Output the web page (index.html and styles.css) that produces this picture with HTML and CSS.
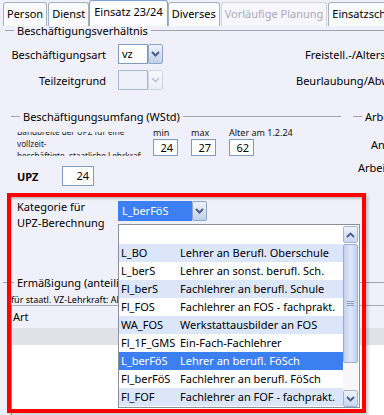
FILE: index.html
```html
<!DOCTYPE html>
<html lang="de">
<head>
<meta charset="utf-8">
<title>Einsatz 23/24</title>
<link rel="stylesheet" href="styles.css">
</head>
<body>
<div class="page">
  <nav class="tabs">
    <div class="tab">Person</div>
    <div class="tab">Dienst</div>
    <div class="tab active">Einsatz 23/24</div>
    <div class="tab">Diverses</div>
    <div class="tab disabled">Vorläufige Planung</div>
    <div class="tab">Einsatzschulen</div>
  </nav>

  <section class="g1">
    <div class="legend"><span class="lead"></span><span class="lt">Beschäftigungsverhältnis</span><span class="rest"></span></div>
    <div class="frow">
      <span class="lbl">Beschäftigungsart</span>
      <div class="combo">
        <span class="field">vz</span>
        <span class="btn"><svg width="9" height="6" viewBox="0 0 9 6"><path d="M1 1 L4.5 4.5 L8 1" fill="none" stroke="#4b5d86" stroke-width="2"/></svg></span>
      </div>
      <span class="rlbl r1">Freistell.-/Altersteilzeit</span>
    </div>
    <div class="frow">
      <span class="lbl">Teilzeitgrund</span>
      <div class="combo disabled">
        <span class="field"></span>
        <span class="btn"><svg width="9" height="6" viewBox="0 0 9 6"><path d="M1 1 L4.5 4.5 L8 1" fill="none" stroke="#bcc3d0" stroke-width="1.6"/></svg></span>
      </div>
      <span class="rlbl r2">Beurlaubung/Abwesenheit</span>
    </div>
  </section>

  <section class="g2">
    <div class="umfang">
      <div class="legend lg2"><span class="lead"></span><span class="lt">Beschäftigungsumfang (WStd)</span><span class="rest"></span></div>
      <div class="ubody">
        <div class="note"><div class="note-in">Bandbreite der UPZ für eine<br>vollzeit-<br>beschäftigte, staatliche Lehrkraft</div></div>
        <div class="nums">
          <span class="nl">min</span><span class="nl">max</span><span class="nl">Alter am 1.2.24</span>
          <span class="num">24</span><span class="num">27</span><span class="num">62</span>
        </div>
      </div>
      <div class="upz"><b>UPZ</b><span class="num upzv">24</span></div>
    </div>
    <div class="arb">
      <div class="legend"><span class="lead"></span><span class="lt">Arbeitszeitkonto</span></div>
      <div class="ar1">Anrechnung</div>
      <div class="ar2">Arbeitszeit</div>
    </div>
  </section>

  <div class="kat">
    <div class="katlbl">Kategorie für<br>UPZ-Berechnung</div>
    <div class="combo sel">
      <span class="field">L_berFöS</span>
      <span class="btn"><svg width="9" height="6" viewBox="0 0 9 6"><path d="M1 1 L4.5 4.5 L8 1" fill="none" stroke="#4b5d86" stroke-width="2"/></svg></span>
    </div>
  </div>

  <section class="erm">
    <div class="legend lg3"><span class="lead"></span><span class="lt">Ermäßigung (anteilig)</span><span class="rest"></span></div>
    <div class="tiny">für staatl. VZ-Lehrkraft: Altersermäßigung</div>
    <div class="table">
      <div class="th">Art</div>
      <div class="trow"></div>
      <div class="tbody"></div>
    </div>
  </section>

  <div class="popup">
    <div class="list">
      <div class="opt"><span class="code"></span><span></span></div>
      <div class="opt"><span class="code">L_BO</span><span>Lehrer an Berufl. Oberschule</span></div>
      <div class="opt"><span class="code">L_berS</span><span>Lehrer an sonst. berufl. Sch.</span></div>
      <div class="opt"><span class="code">Fl_berS</span><span>Fachlehrer an berufl. Schule</span></div>
      <div class="opt"><span class="code">Fl_FOS</span><span>Fachlehrer an FOS - fachprakt.</span></div>
      <div class="opt"><span class="code">WA_FOS</span><span>Werkstattausbilder an FOS</span></div>
      <div class="opt"><span class="code">Fl_1F_GMS</span><span>Ein-Fach-Fachlehrer</span></div>
      <div class="opt sel"><span class="code">L_berFöS</span><span>Lehrer an berufl. FöSch</span></div>
      <div class="opt"><span class="code">Fl_berFöS</span><span>Fachlehrer an berufl. FöSch</span></div>
      <div class="opt"><span class="code">Fl_FOF</span><span>Fachlehrer an FOF - fachprakt.</span></div>
    </div>
    <div class="sb">
      <span class="sbtn"><svg width="9" height="6" viewBox="0 0 9 6"><path d="M1 5 L4.5 1.5 L8 5" fill="none" stroke="#4b5d86" stroke-width="1.8"/></svg></span>
      <span class="thumb"><span class="grip"></span></span>
      <span class="track"></span>
      <span class="sbtn"><svg width="9" height="6" viewBox="0 0 9 6"><path d="M1 1 L4.5 4.5 L8 1" fill="none" stroke="#4b5d86" stroke-width="1.8"/></svg></span>
    </div>
  </div>

  <div class="annot"></div>
</div>
</body>
</html>
```

FILE: styles.css
```css
* { box-sizing: border-box; }
html, body { margin: 0; padding: 0; }
body {
  background: #f0f0fa;
  font-family: "Noto Sans", "Open Sans", sans-serif;
  font-size: 11px;
  color: #000;
}
.page {
  position: relative;
  width: 384px;
  height: 415px;
  overflow: hidden;
  white-space: nowrap;
}

/* tabs */
.tabs {
  display: flex;
  align-items: flex-end;
  gap: 1px;
  height: 26px;
  padding-left: 3px;
}
.tab {
  flex: none;
  height: 24px;
  padding: 0 3px;
  line-height: 21px;
  border: 1px solid #a6b0c3;
  border-bottom: none;
  border-radius: 3px 3px 0 0;
  background: #fbfbfe;
}
.tab.active {
  height: 26px;
  margin: 0 -1px;
  padding: 0 4px;
  border-color: #7fa3da;
  background: #fdfdff;
}
.tab.disabled {
  color: #aaaab7;
  border-color: #d0d4de;
  background: #f6f6fc;
}

/* legends (titled borders) */
.legend {
  display: flex;
  align-items: center;
  height: 15px;
  line-height: 15px;
}
.legend .lead {
  flex: none;
  width: 9px;
  height: 1px;
  margin-right: 3px;
  background: #a3a3ae;
}
.legend .rest {
  flex: 1;
  height: 1px;
  margin-left: 3px;
  background: #a3a3ae;
}

/* group 1 */
.g1 > .legend { margin-top: -3px; padding-left: 5px; }
.frow {
  display: flex;
  align-items: center;
  height: 20px;
  margin-top: 6px;
}
.lbl { flex: none; width: 106px; text-align: right; }
.combo { display: flex; height: 20px; margin-left: 12px; flex: none; }
.combo .field {
  width: 30px;
  height: 20px;
  padding-left: 3px;
  line-height: 18px;
  border: 1px solid #7f9db9;
  background: #fff;
}
.combo .btn {
  display: flex;
  align-items: center;
  justify-content: center;
  width: 15px;
  height: 20px;
  border: 1px solid #8fa4c9;
  border-radius: 2px;
  background: linear-gradient(#eef2fb, #c2d0eb);
}
.combo.disabled .field { background: #f0f0fa; border-color: #a9b9d2; }
.combo.disabled .btn { background: linear-gradient(#f8f9fc, #eceef4); border-color: #cfd5e0; }
.rlbl.r1 { margin-left: 142px; }
.rlbl.r2 { margin-left: 133px; }

/* group 2 */
.g2 { display: flex; margin-top: 19px; }
.umfang { flex: none; width: 341px; }
.lg2 { padding-left: 11px; }
.ubody { display: flex; padding-left: 17px; }
.note {
  flex: none;
  width: 124px;
  height: 24px;
  margin-top: 8px;
  overflow: hidden;
  font-size: 8.2px;
  line-height: 12px;
  color: #222;
}
.note-in { margin-top: -6px; }
.nums {
  display: grid;
  grid-template-columns: repeat(3, 25px);
  column-gap: 13px;
  margin-left: 12px;
  margin-top: 3px;
}
.nl { font-size: 9px; line-height: 11px; color: #111; }
.num {
  display: block;
  height: 17px;
  padding-right: 4px;
  text-align: right;
  line-height: 15px;
  border: 1px solid #7f9db9;
  background: #fff;
}
.upz {
  display: flex;
  align-items: center;
  height: 20px;
  margin-top: 10px;
  padding-left: 17px;
}
.upz b { width: 45px; }
.upzv { width: 32px; height: 20px; line-height: 18px; }
.arb { flex: 1; padding-left: 12px; }
.ar1 { margin-top: 13px; margin-left: 18px; line-height: 15px; }
.ar2 { margin-top: 8px; margin-left: 5px; line-height: 15px; }

/* category row */
.kat { display: flex; margin-top: 13px; padding-left: 17px; }
.katlbl { flex: none; width: 101px; line-height: 16px; }
.combo.sel { margin: 2px 0 0 0; }
.combo.sel .field {
  width: 74px;
  color: #fff;
  background: #3c7ff2;
  border-color: #3c7ff2;
}

/* reductions */
.erm { margin-top: 44px; }
.lg3 { padding-left: 3px; }
.lg3 .lead { width: 11px; }
.tiny {
  margin-top: 4px;
  padding-left: 11px;
  font-size: 9px;
  line-height: 11px;
}
.table {
  margin-left: 11px;
  border-top: 1px solid #a9a9b4;
  border-left: 1px solid #a9a9b4;
}
.th { height: 22px; line-height: 22px; padding-left: 1px; }
.trow { height: 17px; background: #e1e1e9; }
.tbody { height: 80px; background: #fff; }

/* dropdown popup */
.popup {
  position: absolute;
  left: 118px;
  top: 224px;
  width: 242px;
  height: 184px;
  display: flex;
  padding-top: 1px;
  border: 1px solid #8d8da0;
  background: #fff;
}
.list { flex: 1; }
.opt {
  display: flex;
  height: 18px;
  line-height: 18px;
  padding-left: 2px;
}
.opt:nth-child(even) { background: #dbe6fb; }
.opt.sel { background: #3c7ff2; color: #fff; }
.opt .code { flex: none; width: 59px; }
.sb {
  display: flex;
  flex-direction: column;
  width: 16px;
  padding-right: 1px;
}
.sbtn {
  display: flex;
  align-items: center;
  justify-content: center;
  height: 17px;
  border: 1px solid #a3b3d1;
  border-radius: 2px;
  background: linear-gradient(#eef3fc, #c9d6ef);
}
.thumb {
  display: flex;
  align-items: center;
  justify-content: center;
  height: 119px;
  margin-top: 1px;
  border: 1px solid #9aaed4;
  border-radius: 2px;
  background: linear-gradient(90deg, #c3d0ed, #dfe7f8 50%, #c3d0ed);
}
.grip {
  width: 7px;
  height: 5px;
  background: repeating-linear-gradient(#8c9dc2 0 1px, transparent 1px 2px);
}
.track { flex: 1; background: #f7f7fa; }

/* red annotation frame */
.annot {
  position: absolute;
  left: 7px;
  top: 193px;
  width: 359px;
  height: 220px;
  border: 4px solid #ff0000;
  box-shadow: 2px 2px 3px rgba(0, 0, 0, 0.22), inset 0 3px 2px -1px rgba(0, 0, 0, 0.2), inset 1px 0 0 rgba(0, 0, 0, 0.15);
}
```
